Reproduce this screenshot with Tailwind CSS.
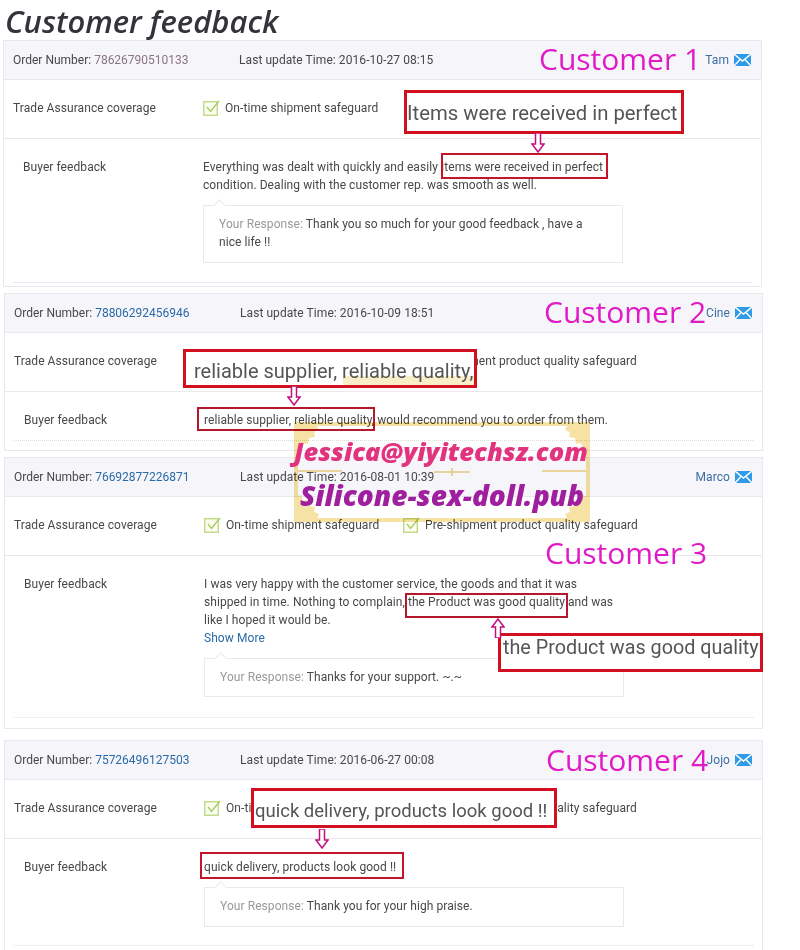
<!DOCTYPE html>
<html lang="en">
<head>
    <meta charset="UTF-8">
    <title>Customer feedback</title>
    <script src="https://cdn.jsdelivr.net/npm/@tailwindcss/browser@4"></script>
</head>
<body class="bg-white">
<div class="relative w-[800px] h-[950px] overflow-hidden font-['Roboto',sans-serif] text-[12px] leading-[18px] tracking-[0.07px] text-[#484848]">

    <h1 class="h-[40px] pl-[5px] font-['Open_Sans',sans-serif] text-[31px] leading-[42px] tracking-normal font-semibold italic text-[#33333b]">Customer feedback</h1>

    <!-- Customer 1 -->
    <section class="ml-[3px] w-[759px] h-[247px] border border-[#e8e8ee] flex flex-col">
        <div class="h-[39px] shrink-0 bg-[#f6f6fa] border-b border-[#e8e8ee] flex items-center pl-[9px] pr-[10px]">
            <span class="w-[226px] tracking-normal">Order Number: <span class="text-[#8a7484]">78626790510133</span></span>
            <span>Last update Time: 2016-10-27 08:15</span>
            <span class="ml-auto flex items-center gap-[5px] text-[#3a6ea5]">Tam
                <svg class="w-[17px] h-[12px]" viewBox="0 0 17 12"><rect width="17" height="12" fill="#2f9be8"/><path d="M0 0l8.500 7L17 0M0 12l6-6.500M17 12l-6-6.500" fill="none" stroke="#fff" stroke-width="1.400"/></svg>
            </span>
        </div>
        <div class="h-[59px] shrink-0 border-b border-[#e8e8ee] flex items-center pl-[9px] pb-[3px]">
            <span class="w-[190px]">Trade Assurance coverage</span>
            <span class="flex items-center gap-[5px]">
                <svg class="w-[17px] h-[16px]" viewBox="0 0 17 16"><rect x="0.750" y="1.750" width="13.500" height="13.500" fill="#fbfdf3" stroke="#c3dc8a" stroke-width="1.500"/><path d="M4 7l3.500 4.500L16 1" fill="none" stroke="#a5cc5c" stroke-width="1.300"/></svg>
                On-time shipment safeguard
            </span>
        </div>
        <div class="flex-1 mx-[9px] mb-[3px] border-b border-[#e8e8ee] flex pt-[19px]">
            <span class="w-[190px] pl-[10px]">Buyer feedback</span>
            <div class="w-[425px]">
                <p>Everything was dealt with quickly and easily Items were received in perfect condition. Dealing with the customer rep. was smooth as well.</p>
                <div class="relative mt-[11px] w-[420px] h-[58px] border border-[#e8e8ee] pl-[15px] pr-[20px] py-[9px]">
                    <i class="absolute -top-[5px] left-[11px] w-[9px] h-[9px] rotate-45 bg-white border-l border-t border-[#e8e8ee]"></i>
                    <span class="text-[#999]">Your Response:</span> Thank you so much for your good feedback , have a nice life !!
                </div>
            </div>
        </div>
    </section>

    <!-- Customer 2 -->
    <section class="mt-[6px] ml-[4px] w-[759px] h-[158px] border border-[#e8e8ee] flex flex-col">
        <div class="h-[39px] shrink-0 bg-[#f6f6fa] border-b border-[#e8e8ee] flex items-center pl-[9px] pr-[10px]">
            <span class="w-[226px] tracking-normal">Order Number: <span class="text-[#2a6aa8]">78806292456946</span></span>
            <span>Last update Time: 2016-10-09 18:51</span>
            <span class="ml-auto flex items-center gap-[5px] text-[#3a6ea5]">Cine
                <svg class="w-[17px] h-[12px]" viewBox="0 0 17 12"><rect width="17" height="12" fill="#2f9be8"/><path d="M0 0l8.500 7L17 0M0 12l6-6.500M17 12l-6-6.500" fill="none" stroke="#fff" stroke-width="1.400"/></svg>
            </span>
        </div>
        <div class="h-[59px] shrink-0 border-b border-[#e8e8ee] flex items-center pl-[9px] pb-[2px]">
            <span class="w-[190px]">Trade Assurance coverage</span>
            <span class="w-[199px] flex items-center gap-[5px]">
                <svg class="w-[17px] h-[16px]" viewBox="0 0 17 16"><rect x="0.750" y="1.750" width="13.500" height="13.500" fill="#fbfdf3" stroke="#c3dc8a" stroke-width="1.500"/><path d="M4 7l3.500 4.500L16 1" fill="none" stroke="#a5cc5c" stroke-width="1.300"/></svg>
                On-time shipment safeguard
            </span>
            <span class="pl-[21px]">Pre-shipment product quality safeguard</span>
        </div>
        <div class="flex-1 mx-[9px] mb-[9px] border-b border-dotted border-[#ddd] flex pt-[19px]">
            <span class="w-[190px] pl-[10px]">Buyer feedback</span>
            <p>reliable supplier, reliable quality, would recommend you to order from them.</p>
        </div>
    </section>

    <!-- Customer 3 -->
    <section class="mt-[6px] ml-[4px] w-[759px] h-[272px] border border-[#e8e8ee] flex flex-col">
        <div class="h-[39px] shrink-0 bg-[#f6f6fa] border-b border-[#e8e8ee] flex items-center pl-[9px] pr-[10px] pb-[1px]">
            <span class="w-[226px] tracking-normal">Order Number: <span class="text-[#2a6aa8]">76692877226871</span></span>
            <span>Last update Time: 2016-08-01 10:39</span>
            <span class="ml-auto flex items-center gap-[5px] text-[#3a6ea5]">Marco
                <svg class="w-[17px] h-[12px]" viewBox="0 0 17 12"><rect width="17" height="12" fill="#2f9be8"/><path d="M0 0l8.500 7L17 0M0 12l6-6.500M17 12l-6-6.500" fill="none" stroke="#fff" stroke-width="1.400"/></svg>
            </span>
        </div>
        <div class="h-[59px] shrink-0 border-b border-[#e8e8ee] flex items-center pl-[9px] pb-[2px]">
            <span class="w-[190px]">Trade Assurance coverage</span>
            <span class="w-[199px] flex items-center gap-[5px]">
                <svg class="w-[17px] h-[16px]" viewBox="0 0 17 16"><rect x="0.750" y="1.750" width="13.500" height="13.500" fill="#fbfdf3" stroke="#c3dc8a" stroke-width="1.500"/><path d="M4 7l3.500 4.500L16 1" fill="none" stroke="#a5cc5c" stroke-width="1.300"/></svg>
                On-time shipment safeguard
            </span>
            <span class="flex items-center gap-[5px]">
                <svg class="w-[17px] h-[16px]" viewBox="0 0 17 16"><rect x="0.750" y="1.750" width="13.500" height="13.500" fill="#fbfdf3" stroke="#c3dc8a" stroke-width="1.500"/><path d="M4 7l3.500 4.500L16 1" fill="none" stroke="#a5cc5c" stroke-width="1.300"/></svg>
                Pre-shipment product quality safeguard
            </span>
        </div>
        <div class="flex-1 mx-[9px] mb-[10px] border-b border-dotted border-[#ddd] flex pt-[19px]">
            <span class="w-[190px] pl-[10px]">Buyer feedback</span>
            <div class="w-[420px]">
                <p class="w-[414px]">I was very happy with the customer service, the goods and that it was shipped in time. Nothing to complain, the Product was good quality and was like I hoped it would be.</p>
                <a class="block text-[#2a6aa8]">Show More</a>
                <div class="relative mt-[11px] w-[420px] h-[39px] border border-[#e8e8ee] pl-[15px] py-[9px]">
                    <i class="absolute -top-[5px] left-[11px] w-[9px] h-[9px] rotate-45 bg-white border-l border-t border-[#e8e8ee]"></i>
                    <span class="text-[#999]">Your Response:</span> Thanks for your support. ~.~
                </div>
            </div>
        </div>
    </section>

    <!-- Customer 4 -->
    <section class="mt-[11px] ml-[4px] w-[759px] h-[240px] border border-[#e8e8ee] flex flex-col">
        <div class="h-[39px] shrink-0 bg-[#f6f6fa] border-b border-[#e8e8ee] flex items-center pl-[9px] pr-[10px]">
            <span class="w-[226px] tracking-normal">Order Number: <span class="text-[#2a6aa8]">75726496127503</span></span>
            <span>Last update Time: 2016-06-27 00:08</span>
            <span class="ml-auto flex items-center gap-[5px] text-[#3a6ea5]">Jojo
                <svg class="w-[17px] h-[12px]" viewBox="0 0 17 12"><rect width="17" height="12" fill="#2f9be8"/><path d="M0 0l8.500 7L17 0M0 12l6-6.500M17 12l-6-6.500" fill="none" stroke="#fff" stroke-width="1.400"/></svg>
            </span>
        </div>
        <div class="h-[59px] shrink-0 border-b border-[#e8e8ee] flex items-center pl-[9px] pb-[2px]">
            <span class="w-[190px]">Trade Assurance coverage</span>
            <span class="w-[199px] flex items-center gap-[5px]">
                <svg class="w-[17px] h-[16px]" viewBox="0 0 17 16"><rect x="0.750" y="1.750" width="13.500" height="13.500" fill="#fbfdf3" stroke="#c3dc8a" stroke-width="1.500"/><path d="M4 7l3.500 4.500L16 1" fill="none" stroke="#a5cc5c" stroke-width="1.300"/></svg>
                On-time shipment safeguard
            </span>
            <span class="pl-[21px]">Pre-shipment product quality safeguard</span>
        </div>
        <div class="h-[107px] mx-[9px] border-b border-dotted border-[#ddd] flex pt-[19px]">
            <span class="w-[190px] pl-[10px]">Buyer feedback</span>
            <div class="w-[420px]">
                <p>quick delivery, products look good !!</p>
                <div class="relative mt-[11px] w-[420px] h-[40px] border border-[#e8e8ee] pl-[15px] py-[9px]">
                    <i class="absolute -top-[5px] left-[11px] w-[9px] h-[9px] rotate-45 bg-white border-l border-t border-[#e8e8ee]"></i>
                    <span class="text-[#999]">Your Response:</span> Thank you for your high praise.
                </div>
            </div>
        </div>
    </section>

    <!-- annotations pasted over the page -->
    <span class="absolute left-[539px] top-[38px] font-['Open_Sans',sans-serif] text-[30px] leading-[42px] tracking-normal text-[#e01ac6]">Customer 1</span>
    <span class="absolute left-[544px] top-[291px] font-['Open_Sans',sans-serif] text-[30px] leading-[42px] tracking-normal text-[#e01ac6]">Customer 2</span>
    <span class="absolute left-[545px] top-[532px] font-['Open_Sans',sans-serif] text-[30px] leading-[42px] tracking-normal text-[#e01ac6]">Customer 3</span>
    <span class="absolute left-[546px] top-[739px] font-['Open_Sans',sans-serif] text-[30px] leading-[42px] tracking-normal text-[#e01ac6]">Customer 4</span>

    <div class="absolute left-[404px] top-[90px] w-[280px] h-[44px] border-[3px] border-[#d3101f] bg-white flex items-center pt-[2px] text-[20.300px] tracking-normal text-[#555] whitespace-nowrap">Items were received in perfect</div>
    <div class="absolute left-[441px] top-[153px] w-[167px] h-[26px] border-2 border-[#c5152a]"></div>
    <svg class="absolute left-[531px] top-[133px] w-[14px] h-[20px]" viewBox="0 0 14 20"><path d="M4.500 0v11H1l6 8 6-8H9.500V0z" fill="#fff" stroke="#c4107f" stroke-width="1.500"/></svg>

    <div class="absolute left-[183px] top-[349px] w-[294px] h-[39px] border-[3px] border-[#d3101f] bg-white flex items-center pl-[8px] pt-[4px] text-[20px] tracking-normal text-[#555] whitespace-nowrap">
        <i class="absolute left-[157px] bottom-0 w-[131px] h-[9px] bg-[#f6e2a4]/60"></i>
        <span class="relative">reliable supplier, reliable quality,</span>
    </div>
    <div class="absolute left-[197px] top-[407px] w-[178px] h-[24px] border-2 border-[#b5182c]"></div>
    <svg class="absolute left-[287px] top-[386px] w-[14px] h-[20px]" viewBox="0 0 14 20"><path d="M4.500 0v11H1l6 8 6-8H9.500V0z" fill="#fff" stroke="#c4107f" stroke-width="1.500"/></svg>

    <div class="absolute left-[405px] top-[593px] w-[163px] h-[25px] border-2 border-[#b5182c]"></div>
    <div class="absolute left-[498px] top-[633px] w-[265px] h-[39px] border-[3px] border-[#d3101f] bg-white flex items-center pl-[2px] pb-[10px] text-[19.800px] tracking-normal text-[#555] whitespace-nowrap">the Product was good quality</div>
    <svg class="absolute left-[491px] top-[618px] w-[14px] h-[20px]" viewBox="0 0 14 20"><path d="M4.500 20V9H1l6-8 6 8H9.500v11z" fill="#fff" stroke="#c4107f" stroke-width="1.500"/></svg>

    <div class="absolute left-[251px] top-[788px] w-[306px] h-[40px] border-[3px] border-[#d3101f] bg-white flex items-center pt-[5px] pl-[1px] text-[18.500px] tracking-normal text-[#555] whitespace-nowrap">quick delivery, products look good !!</div>
    <div class="absolute left-[200px] top-[852px] w-[204px] h-[27px] border-2 border-[#c5152a]"></div>
    <svg class="absolute left-[315px] top-[829px] w-[14px] h-[20px]" viewBox="0 0 14 20"><path d="M4.500 0v11H1l6 8 6-8H9.500V0z" fill="#fff" stroke="#c4107f" stroke-width="1.500"/></svg>

    <!-- contact watermark: gold frame multiplied over the page, then the two lines -->
    <svg class="absolute left-[294px] top-[422px] w-[296px] h-[100px] mix-blend-multiply" viewBox="0 0 296 100" fill="#f6e2a4">
        <path d="M0 0H296V100H0zM4 4V96H292V4z" fill-rule="evenodd"/>
        <path d="M0 0H26L23 4 25 8 20 10 21 15 15 16 14 22 9 21 7 27 4 26 0 30z"/>
        <path d="M296 0H270L273 4 271 8 276 10 275 15 281 16 282 22 287 21 289 27 292 26 296 30z"/>
        <path d="M0 100H26L23 96 25 92 20 90 21 85 15 84 14 78 9 79 7 73 4 74 0 70z"/>
        <path d="M296 100H270L273 96 271 92 276 90 275 85 281 84 282 78 287 79 289 73 292 74 296 70z"/>
        <path d="M4 49H48M248 49H292" stroke="#ecd07f" stroke-width="1.500"/>
        <path d="M140 50H176M158 46v8" stroke="#ecd07f" stroke-width="1.500"/>
    </svg>
    <div class="absolute left-[294px] top-[435px] font-['Open_Sans',sans-serif] text-[25.500px] leading-[32px] tracking-normal italic font-extrabold text-[#e2337f] whitespace-nowrap">Jessica@yiyitechsz.com</div>
    <div class="absolute left-[300px] top-[477px] font-['Open_Sans',sans-serif] text-[28px] leading-[36px] tracking-normal italic font-extrabold text-[#a01f9f] whitespace-nowrap">Silicone-sex-doll.pub</div>
</div>
</body>
</html>
